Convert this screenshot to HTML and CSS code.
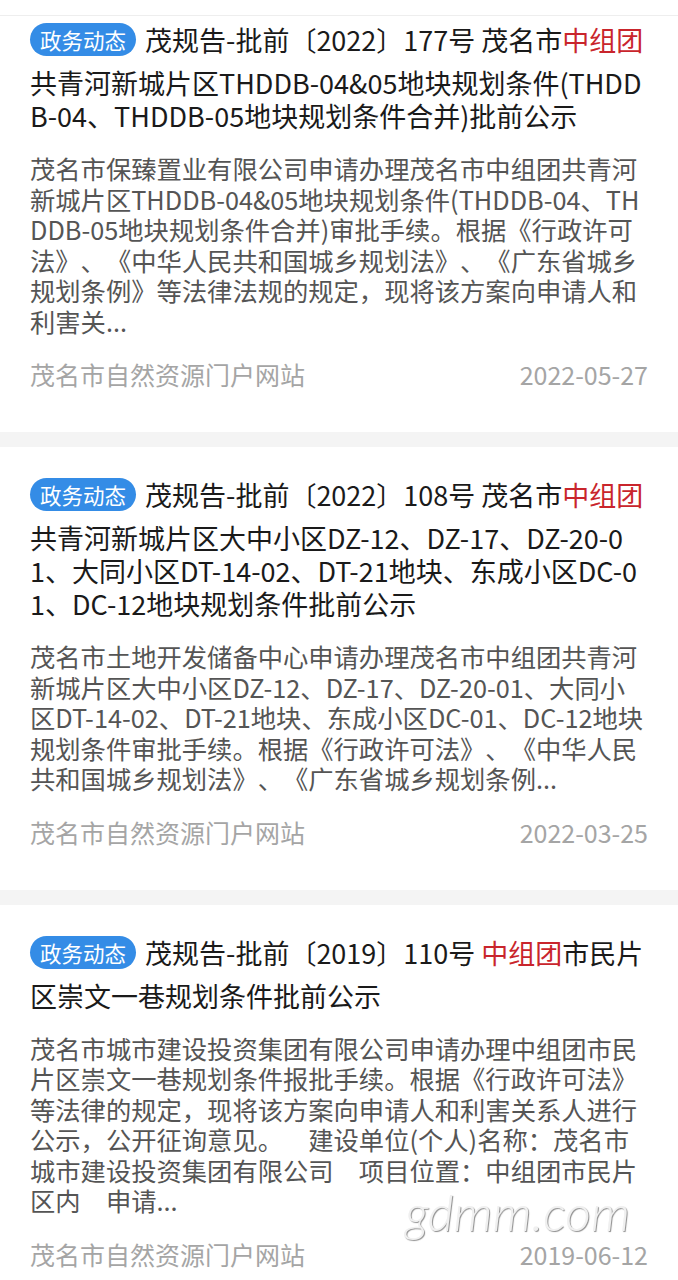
FILE: index.html
```html
<!DOCTYPE html>
<html>

<head lang="zh">
    <meta charset="UTF-8">
    <title>政务动态</title>
    <link rel="stylesheet" href="styles.css">
</head>

<body>
<div class="top-line"></div>
<!-- 新闻列表 -->
<ul class="news-list">
    <li class="news-item news-item-first">
        <h3 class="news-title"><span class="tag">政务动态</span>茂规告-批前〔2022〕177号 茂名市<em class="hl">中组团</em>共青河新城片区THDDB-04&amp;05地块规划条件(THDDB-04、THDDB-05地块规划条件合并)批前公示</h3>
        <p class="news-desc">茂名市保臻置业有限公司申请办理茂名市中组团共青河新城片区THDDB-04&amp;05地块规划条件(THDDB-04、THDDB-05地块规划条件合并)审批手续。根据《行政许可法》、《中华人民共和国城乡规划法》、《广东省城乡规划条例》等法律法规的规定，现将该方案向申请人和利害关...</p>
        <div class="news-meta">
            <span>茂名市自然资源门户网站</span>
            <span class="date">2022-05-27</span>
        </div>
    </li>
    <li class="news-item">
        <h3 class="news-title"><span class="tag">政务动态</span>茂规告-批前〔2022〕108号 茂名市<em class="hl">中组团</em>共青河新城片区大中小区DZ-12、DZ-17、DZ-20-01、大同小区DT-14-02、DT-21地块、东成小区DC-01、DC-12地块规划条件批前公示</h3>
        <p class="news-desc">茂名市土地开发储备中心申请办理茂名市中组团共青河新城片区大中小区DZ-12、DZ-17、DZ-20-01、大同小区DT-14-02、DT-21地块、东成小区DC-01、DC-12地块规划条件审批手续。根据《行政许可法》、《中华人民共和国城乡规划法》、《广东省城乡规划条例...</p>
        <div class="news-meta">
            <span>茂名市自然资源门户网站</span>
            <span class="date">2022-03-25</span>
        </div>
    </li>
    <li class="news-item">
        <h3 class="news-title"><span class="tag">政务动态</span>茂规告-批前〔2019〕110号 <em class="hl">中组团</em>市民片区崇文一巷规划条件批前公示</h3>
        <p class="news-desc">茂名市城市建设投资集团有限公司申请办理中组团市民片区崇文一巷规划条件报批手续。根据《行政许可法》等法律的规定，现将该方案向申请人和利害关系人进行公示，公开征询意见。　建设单位(个人)名称：茂名市城市建设投资集团有限公司　项目位置：中组团市民片区内　申请...</p>
        <div class="news-meta">
            <span>茂名市自然资源门户网站</span>
            <span class="date">2019-06-12</span>
        </div>
    </li>
</ul>
<!-- 水印 -->
<div class="watermark">gdmm.com</div>
</body>

</html>
```

FILE: styles.css
```css
* {
    padding: 0;
    margin: 0;
}

ul, ol {
    list-style: none;
}

body {
    position: relative;
    background-color: #fff;
    font-family: "Noto Sans CJK SC", "Noto Sans", sans-serif;
    text-spacing-trim: space-all;
    overflow: hidden;
}

.top-line {
    height: 15px;
    border-bottom: 1px solid #eee;
}

.news-list {
    background-color: #f4f4f4;
}

.news-item {
    background-color: #fff;
    padding: 31px 30px 43px;
    margin-bottom: 15px;
}

.news-item-first {
    padding-top: 7px;
}

.news-title {
    font-size: 27px;
    line-height: 33px;
    font-weight: normal;
    color: #1a1a1a;
    word-break: break-all;
}

.tag {
    display: inline-block;
    vertical-align: top;
    height: 33px;
    line-height: 33px;
    padding: 0 10px;
    margin: 0 9px 10px 0;
    border-radius: 17px;
    background-color: #348ce6;
    color: #fff;
    font-size: 21.5px;
}

.hl {
    font-style: normal;
    color: #c9252c;
}

.news-desc {
    margin-top: 21px;
    font-size: 25.3px;
    line-height: 30.5px;
    color: #555;
    word-break: break-all;
}

.news-meta {
    display: flex;
    justify-content: space-between;
    margin-top: 23px;
    font-size: 25px;
    line-height: 30px;
    color: #a5a5a5;
}

.watermark {
    position: absolute;
    right: 48px;
    top: 1182px;
    font-family: "Lato", sans-serif;
    font-style: italic;
    font-weight: 300;
    font-size: 50px;
    color: #f0f0f0;
    text-shadow: 1px 1px 1px #8f8f8f, -1px -1px 0 #fff;
}
```
